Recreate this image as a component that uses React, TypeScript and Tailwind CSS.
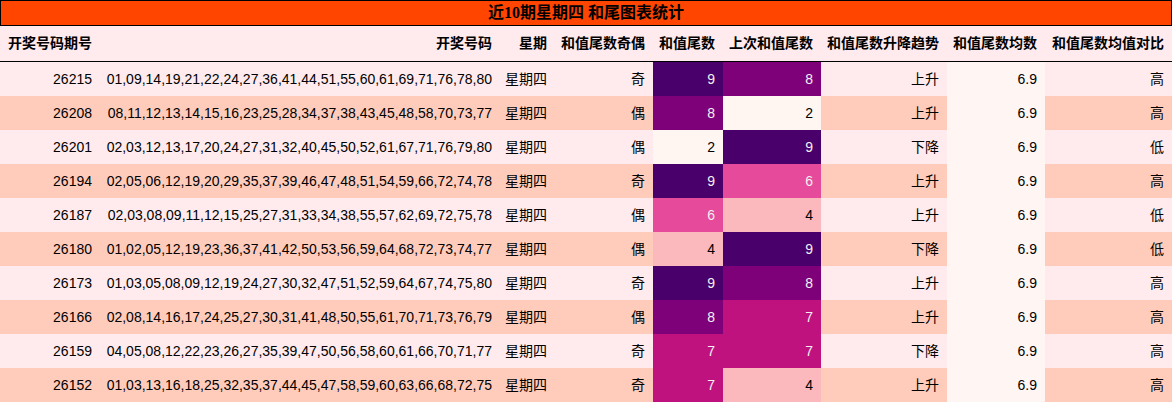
import React from "react";

type Row = {
  id: string;
  nums: string;
  oe: string;
  v: number;
  prev: number;
  trend: string;
  cmp: string;
};

const rows: Row[] = [
  { id: "26215", nums: "01,09,14,19,21,22,24,27,36,41,44,51,55,60,61,69,71,76,78,80", oe: "奇", v: 9, prev: 8, trend: "上升", cmp: "高" },
  { id: "26208", nums: "08,11,12,13,14,15,16,23,25,28,34,37,38,43,45,48,58,70,73,77", oe: "偶", v: 8, prev: 2, trend: "上升", cmp: "高" },
  { id: "26201", nums: "02,03,12,13,17,20,24,27,31,32,40,45,50,52,61,67,71,76,79,80", oe: "偶", v: 2, prev: 9, trend: "下降", cmp: "低" },
  { id: "26194", nums: "02,05,06,12,19,20,29,35,37,39,46,47,48,51,54,59,66,72,74,78", oe: "奇", v: 9, prev: 6, trend: "上升", cmp: "高" },
  { id: "26187", nums: "02,03,08,09,11,12,15,25,27,31,33,34,38,55,57,62,69,72,75,78", oe: "偶", v: 6, prev: 4, trend: "上升", cmp: "低" },
  { id: "26180", nums: "01,02,05,12,19,23,36,37,41,42,50,53,56,59,64,68,72,73,74,77", oe: "偶", v: 4, prev: 9, trend: "下降", cmp: "低" },
  { id: "26173", nums: "01,03,05,08,09,12,19,24,27,30,32,47,51,52,59,64,67,74,75,80", oe: "奇", v: 9, prev: 8, trend: "上升", cmp: "高" },
  { id: "26166", nums: "02,08,14,16,17,24,25,27,30,31,41,48,50,55,61,70,71,73,76,79", oe: "偶", v: 8, prev: 7, trend: "上升", cmp: "高" },
  { id: "26159", nums: "04,05,08,12,22,23,26,27,35,39,47,50,56,58,60,61,66,70,71,77", oe: "奇", v: 7, prev: 7, trend: "下降", cmp: "高" },
  { id: "26152", nums: "01,03,13,16,18,25,32,35,37,44,45,47,58,59,60,63,66,68,72,75", oe: "奇", v: 7, prev: 4, trend: "上升", cmp: "高" },
];

function heat(n: number): string {
  switch (n) {
    case 9:
      return "bg-[#49006a] text-[#f1f1f1]";
    case 8:
      return "bg-[#7f0179] text-[#f1f1f1]";
    case 7:
      return "bg-[#c0127f] text-[#f1f1f1]";
    case 6:
      return "bg-[#e54a9b] text-[#f1f1f1]";
    case 4:
      return "bg-[#fbb8bd] text-black";
    default:
      return "bg-[#fff6f2] text-black";
  }
}

const grid =
  "grid grid-cols-[100px_400px_55px_98px_70px_98px_126px_98px_127px]";

export default function App() {
  return (
    <div
      className="w-[1172px] h-[403px] bg-white text-black text-[14px]"
      style={{ fontFamily: '"Liberation Sans", "Noto Sans CJK SC", sans-serif' }}
    >
      <div
        className="h-[26px] border border-black bg-[#ff4500] flex items-center justify-center text-[16px] font-bold"
        style={{ fontFamily: '"Liberation Serif", "Noto Sans CJK SC", serif' }}
      >
        近10期星期四 和尾图表统计
      </div>
      <div className={`${grid} h-[36px] bg-[#ffebee] border-b border-black font-bold`}>
        <div className="flex items-center pl-2">开奖号码期号</div>
        <div className="flex items-center justify-end pr-2">开奖号码</div>
        <div className="flex items-center justify-end pr-2">星期</div>
        <div className="flex items-center justify-end pr-2">和值尾数奇偶</div>
        <div className="flex items-center justify-end pr-2">和值尾数</div>
        <div className="flex items-center justify-end pr-2">上次和值尾数</div>
        <div className="flex items-center justify-end pr-2">和值尾数升降趋势</div>
        <div className="flex items-center justify-end pr-2">和值尾数均数</div>
        <div className="flex items-center justify-end pr-2">和值尾数均值对比</div>
      </div>
      {rows.map((r, i) => {
        const bg = i % 2 === 0 ? "bg-[#ffebee]" : "bg-[#ffccbc]";
        return (
          <div key={r.id} className={`${grid} h-[34px]`}>
            <div className={`${bg} flex items-center justify-end pr-2`}>{r.id}</div>
            <div className={`${bg} flex items-center justify-end pr-2`}>{r.nums}</div>
            <div className={`${bg} flex items-center justify-end pr-2`}>星期四</div>
            <div className={`${bg} flex items-center justify-end pr-2`}>{r.oe}</div>
            <div className={`${heat(r.v)} flex items-center justify-end pr-2`}>{r.v}</div>
            <div className={`${heat(r.prev)} flex items-center justify-end pr-2`}>{r.prev}</div>
            <div className={`${bg} flex items-center justify-end pr-2`}>{r.trend}</div>
            <div className="bg-[#fff5f2] flex items-center justify-end pr-2">6.9</div>
            <div className={`${bg} flex items-center justify-end pr-2`}>{r.cmp}</div>
          </div>
        );
      })}
    </div>
  );
}
